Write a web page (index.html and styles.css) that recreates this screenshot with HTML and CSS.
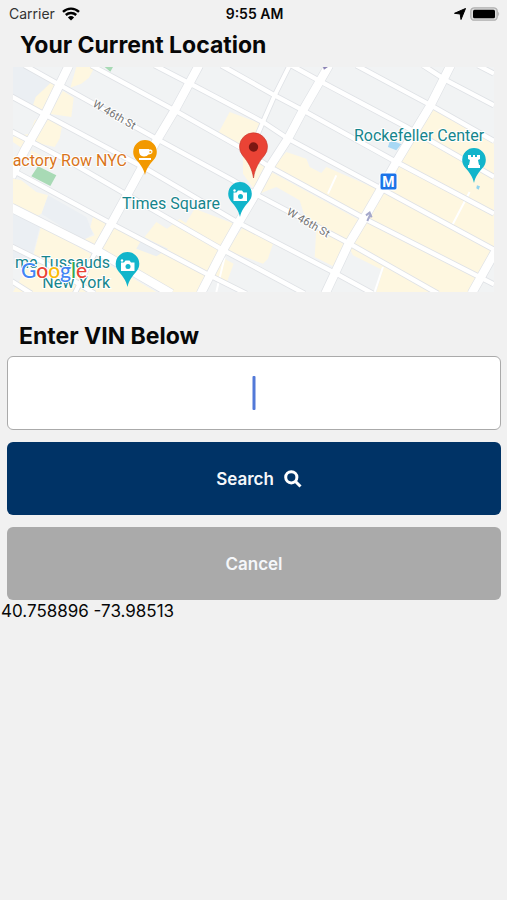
FILE: index.html
```html
<!DOCTYPE html>
<html lang="en">
<head>
<meta charset="utf-8">
<meta name="viewport" content="width=device-width, initial-scale=1">
<title>VIN Search</title>
<link rel="stylesheet" href="styles.css">
</head>
<body>
<header class="status">
  <div class="status-side">
    <span>Carrier</span>
    <svg class="wifi" viewBox="0 0 18 14" aria-hidden="true">
      <path d="M1 4.800a11.600 11.600 0 0 1 16 0M3.800 8a7.600 7.600 0 0 1 10.400 0" fill="none" stroke="#000" stroke-width="2.400"/>
      <path d="M9 13.600 5.900 10.500a4.500 4.500 0 0 1 6.200 0z"/>
    </svg>
  </div>
  <span class="status-time">9:55 AM</span>
  <div class="status-side status-right">
    <svg class="arrow" viewBox="0 0 12 12" aria-hidden="true"><path d="M11.500.5 7 11.500 6.200 6 .5 5.300z" stroke="#000" stroke-linejoin="round"/></svg>
    <svg class="battery" viewBox="0 0 30 14" aria-hidden="true">
      <rect x=".8" y=".8" width="26.400" height="12.400" rx="3.500" fill="#dcdcdc" stroke="#b0b0b0" stroke-width="1.300"/>
      <rect x="3" y="2.700" width="22" height="8.600" rx="1.500"/>
      <path d="M28.200 4.800q2 2.200 0 4.400z" fill="#b0b0b0"/>
    </svg>
  </div>
</header>
<main>
  <h1 class="title">Your Current Location</h1>
  <svg class="map" viewBox="13 67 481 225" role="img" aria-label="Map of the current location">
    <defs>
      <path id="teardrop" d="M0 20C-1.500 13-5 9-8.500 5a11.800 11.800 0 1 1 17 0C5 9 1.500 13 0 20z"/>
      <g id="camera">
        <path d="M-6.500-3.500h3l1.500-2h4l1.500 2h3.500v8.500H-6.500z" fill="#fff"/>
        <circle cx=".5" cy=".5" r="2.500" fill="#12b5cb"/><circle cx="-5.500" cy="-5.500" r="1.200" fill="#fff"/>
      </g>
      <path id="streets" d="M1395-5 1443 20M1230-5 1300 40 1443 115M1030-5 1250 113 1443 222M835-5 920 42 1180 180 1443 330M625-5 785 85 870 130 1150 285 1443 440M425-5 545 57 750 165 825 215 1110 368 1443 548M235-5 485 130 680 240 770 300 1065 460 1443 652M35-5 160 65 435 218 660 340 735 385 1010 530 1275 680M-5 88 100 145 395 303 675 467 970 620 1080 680M-5 193 180 290 345 385 630 549 875 680M-5 308 295 470 590 625 700 680M-5 538 100 590 245 680M-5 642 55 680"/>
      <g id="avenues">
        <path d="M168-5 95 145 35 250-5 330M558-5 485 130 430 222 350 370 295 470 250 550M948-5 870 130 825 215 770 300 725 385 675 470 630 550 563 680M1313-5 1250 120 1150 285 1105 365 1050 460 1005 535 937 680M1448 552 1376 680"/>
        <path d="M-5 422 250 550 475 680"/>
      </g>
      <path id="lanes" d="M830-5 785 85 750 165 735 200M250 550 185 680"/>
    </defs>
    <path fill="#f1f3f4" d="M13 67h481v225H13z"/>
    <g transform="translate(13 67) scale(.3333)">
      <path fill="#ebeff3" d="M0 0 40 0 115 45 70 90 60 120 0 90zM105 385 220 450 240 500 210 520 85 440zM0 440 80 480 60 560 0 530z"/>
      <g fill="#fef7e0">
        <path d="M40 0 75 8 60 15zM120 40 145 50 95 145 58 120 68 90 100 60zM190 0H245L228 32 205 50 172 62zM150 72 182 92 175 150 108 140zM105 155 147 178 140 215 125 240 60 225zM65 160 85 150 35 250 0 225 0 210 50 200zM55 250 130 290 120 305 50 290z"/>
        <path d="M650 135 745 170 735 210 690 240 615 200zM690 255V320L725 370 765 300 750 280zM820 255 880 275 890 300 925 318 940 300 1100 370 1045 455 775 305z"/>
        <path d="M1255 125 1443 230V560L1380 675H1090L1110 610 1020 565 1005 535 965 600 905 570 910 490 880 465 860 400 790 360 765 370 740 380 765 310 1050 465 1155 285z"/>
        <path d="M690 480 780 530 765 575 750 590 640 550zM625 570 662 590 640 650 595 630zM0 335 25 340 70 375 105 385 85 440 70 448 0 415z"/>
        <path d="M545 425 675 475 635 545 515 475zM430 465 462 485 500 455 635 550 590 620 395 510zM305 480 590 630 565 675H480L255 550zM240 450 290 475 250 550 208 520 245 505 232 480zM85 475 430 675H0L60 570z"/>
      </g>
      <path fill="#ebeff3" d="M390 510 465 545 430 568 370 545zM0 550 60 570 50 600 0 590z"/>
      <path fill="#a8dab5" d="M75 298 130 325 112 357 55 328zM275 0H300L292 14z"/>
      <path fill="#a8d8f5" d="M1132 218 1165 232 1150 250 1125 240z"/>
      <g fill="none">
        <path d="M970 325 945 380M1370 375 1315 480M1110 600 1085 675M635 570 610 675" stroke="#fff" stroke-width="6"/>
        <g stroke="#dfe2e6"><use href="#streets" stroke-width="18"/><use href="#avenues" stroke-width="29"/><use href="#lanes" stroke-width="17"/></g>
        <g stroke="#fff"><use href="#streets" stroke-width="13"/><use href="#avenues" stroke-width="25"/><use href="#lanes" stroke-width="12"/></g>
        <path d="M1063 462 1073 440M1059 445 1070 437 1076 451" stroke="#a5a8cb" stroke-width="6"/>
      </g>
      <path d="M930 0h15l-12 8z" fill="#8c84b5"/>
      <path fill="#8fd3ee" d="M1392 355l9 3-4 10-7-4z"/>
    </g>
    <g class="road-name">
      <text transform="translate(92 106) rotate(30)">W 46th St</text>
      <text transform="translate(286 214) rotate(30)">W 46th St</text>
    </g>
    <g class="place">
      <text x="354" y="141">Rockefeller Center</text>
      <text x="122" y="209">Times Square</text>
      <text x="110" y="268" text-anchor="end">me Tussauds</text>
      <text x="110" y="288" text-anchor="end">New York</text>
      <text class="food" x="127" y="166" text-anchor="end">actory Row NYC</text>
    </g>
    <g transform="translate(145 155)">
      <use href="#teardrop" fill="#f29900"/>
      <path d="M-6-6H4V-5.500H6q2 .5 1.500 2.500T3.500-.5Q2 1.500-1 1.500-6 1-6-4zM4.500-4v2q2 0 2-1t-2-1zM-6 3H6v2H-6z" fill="#fff" fill-rule="evenodd"/>
    </g>
    <g transform="translate(240 197)"><use href="#teardrop" fill="#12b5cb"/><use href="#camera" y="-1"/></g>
    <g transform="translate(127.500 267)"><use href="#teardrop" fill="#12b5cb"/><use href="#camera" y="-1"/></g>
    <g transform="translate(474 163)">
      <use href="#teardrop" fill="#12b5cb"/>
      <path d="M-6-8h3v2h2v-2h2v2h2v-2h3v4l-2 1 1 5h1v3H-6V2h1l1-5-2-1z" fill="#fff"/>
    </g>
    <rect x="380" y="173" width="17" height="17" rx="2" fill="#1a73e8" stroke="#fff"/>
    <text class="metro" x="388.500" y="187" text-anchor="middle">M</text>
    <path d="M253.500 178C252 168 248 162 243 156a14 14 0 1 1 21 0C259 162 255 168 253.500 178z" fill="#ea4335" stroke="#c5372c" stroke-width=".6"/>
    <circle cx="253.500" cy="147" r="4.700" fill="#7c1712"/>
    <text class="logo" x="21" y="278"><tspan fill="#4285f4">G</tspan><tspan fill="#ea4335">o</tspan><tspan fill="#fbbc05">o</tspan><tspan fill="#4285f4">g</tspan><tspan fill="#34a853">l</tspan><tspan fill="#ea4335">e</tspan></text>
  </svg>
  <form class="form">
    <label class="title" for="vin">Enter VIN Below</label>
    <div class="field">
      <input id="vin" type="text" autocomplete="off">
      <span class="caret"></span>
    </div>
    <button class="btn btn-search" type="button">Search
      <svg class="glass" viewBox="0 0 18 18" aria-hidden="true"><circle cx="7.300" cy="7.300" r="5.600"/><path d="m11.500 11.500 5 5"/></svg>
    </button>
    <button class="btn btn-cancel" type="button">Cancel</button>
  </form>
  <p class="coords">40.758896 -73.98513</p>
</main>
</body>
</html>
```
FILE: styles.css
```css
* {
  box-sizing: border-box;
}

body {
  margin: 0;
  min-height: 100vh;
  background: #f1f1f1;
  color: #080808;
  font-family: Inter, "Liberation Sans", sans-serif;
}

.status {
  display: flex;
  align-items: center;
  height: 27px;
  padding: 0 7px 0 9px;
  font-size: 14px;
}

.status-side {
  display: flex;
  flex: 1;
  align-items: center;
  gap: 7px;
  color: #333;
}

.status-right {
  justify-content: flex-end;
  gap: 4px;
}

.status-time {
  font-weight: 600;
}

.wifi {
  width: 18px;
  height: 14px;
}

.arrow {
  width: 12px;
  height: 12px;
}

.battery {
  width: 30px;
  height: 14px;
}

.title {
  display: block;
  margin: 0;
  padding: 0 20px;
  font-size: 23px;
  font-weight: 700;
  line-height: 36px;
}

.map {
  display: block;
  width: calc(100% - 26px);
  margin: 4px 13px 26px;
}

.map text {
  font-family: Roboto, sans-serif;
}

.map .place text {
  font-size: 16px;
  fill: #16858c;
  stroke: #fff;
  stroke-width: 2px;
  paint-order: stroke;
}

.map .place .food {
  fill: #d9741a;
}

.map .road-name text {
  font-size: 11px;
  fill: #757575;
  stroke: #fff;
  stroke-width: 2px;
  paint-order: stroke;
}

.map .metro {
  font-size: 14px;
  font-weight: 700;
  fill: #fff;
}

.map .logo {
  font-family: Lato, sans-serif;
  font-size: 21px;
  font-weight: 500;
  stroke: #fff;
  stroke-width: 2px;
  paint-order: stroke;
}

.form {
  display: flex;
  flex-direction: column;
  gap: 12px;
  padding: 0 6px 0 7px;
}

.form .title {
  padding: 0 12px;
  margin-bottom: -10px;
}

.field {
  position: relative;
}

.field input {
  display: block;
  width: 100%;
  height: 74px;
  border: 1px solid #aaa;
  border-radius: 6px;
  background: #fff;
  font: inherit;
  font-size: 28px;
  text-align: center;
}

.caret {
  position: absolute;
  top: 20px;
  left: 50%;
  width: 3px;
  height: 34px;
  border-radius: 1px;
  background: #5279d8;
  transform: translateX(-50%);
}

.btn {
  display: flex;
  align-items: center;
  justify-content: center;
  gap: 10px;
  height: 73px;
  padding: 0;
  border: 0;
  border-radius: 6px;
  color: #f5f7fa;
  font: inherit;
  font-size: 17px;
  font-weight: 600;
}

.btn-search {
  padding-left: 10px;
  background: #003366;
}

.btn-cancel {
  background: #aaa;
}

.glass {
  width: 18px;
  height: 18px;
  fill: none;
  stroke: #fff;
  stroke-width: 3;
}

.coords {
  margin: 0;
  padding: 0 1px;
  font-size: 17px;
  line-height: 22px;
}
```
